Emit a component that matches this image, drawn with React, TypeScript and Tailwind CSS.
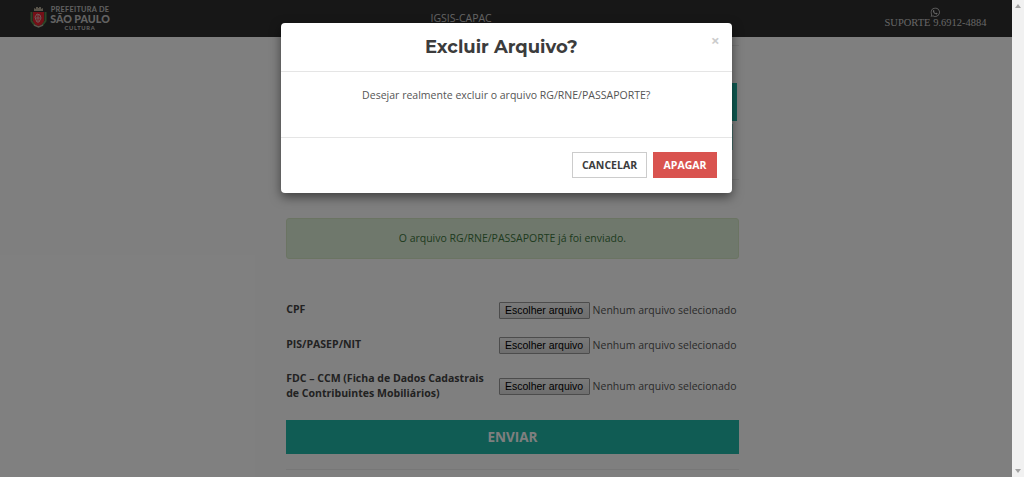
import React from 'react';
import { FaWhatsapp } from 'react-icons/fa';

function Crest() {
  return (
    <svg width="17" height="21" viewBox="0 0 17 21" className="shrink-0">
      <path d="M4 4V1l2 1V0h2v1h1V0h2v2l2-1v3z" fill="#b3a894" />
      <path d="M3 5h11v8c0 4-3 5-5.500 6C6 18 3 17 3 13z" fill="#e8202f" />
      <path d="M1.500 5v9l3 4M15.500 5v9l-3 4" fill="none" stroke="#5b8a50" strokeWidth="2" />
      <path d="M6 13l-1-3 2-3 3 1 1 3-2 4H7z" fill="none" stroke="#dcc8c4" strokeWidth=".9" />
      <path d="M6 11h4M8 8v6" stroke="#d8bcb8" strokeWidth=".9" />
      <path d="M4 18l4.500 2 4.500-2" fill="none" stroke="#b4aa99" strokeWidth="1.500" />
    </svg>
  );
}

function FileRow({ label, className }: { label: React.ReactNode; className: string }) {
  return (
    <div className={`flex items-center ${className}`}>
      <div className="w-[212.400px] shrink-0 pb-px text-[10.540px] font-bold leading-[14.500px] text-[#444]">{label}</div>
      <div className="flex h-[18px] items-center whitespace-nowrap">
        <button className="h-[17px] w-[91px] rounded-[1px] border border-[#999] bg-linear-to-b from-[#f4f4f4] to-[#dcdcdc] font-['Liberation_Sans',sans-serif] text-[10.5px] leading-[14px] text-black">
          Escolher arquivo
        </button>
        <span className="ml-[3px] text-[10.5px] leading-[15px] text-[#555]">Nenhum arquivo selecionado</span>
      </div>
    </div>
  );
}

function Page() {
  return (
    <div className="h-full bg-white">
      <header className="flex h-[37px] justify-between bg-[#2e2e2e]">
        <div className="flex w-[200px] pl-[30px] pt-[7px]">
          <Crest />
          <div className="-mt-px ml-[2px] w-[62px] text-center font-['Lato',sans-serif] font-bold text-[#c4c4c4]">
            <div className="whitespace-nowrap text-[7.300px] leading-[7px] tracking-[.3px]">PREFEITURA DE</div>
            <div className="whitespace-nowrap text-[10.700px] font-black leading-[11px]">SÃO PAULO</div>
            <div className="pt-px text-[5.800px] leading-[6px] tracking-[.7px]">CULTURA</div>
          </div>
        </div>
        <div className="flex-1 pl-[230.500px] pt-[11px] text-[10.5px] leading-[15px] text-[#ccc]">IGSIS-CAPAC</div>
        <div className="w-[153px] pt-[7px] text-center font-['Liberation_Serif',serif] text-[10.5px] leading-[11px] text-[#ccc]">
          <FaWhatsapp className="mx-auto size-[10.5px]" />
          <div className="-mt-px">SUPORTE 9.6912-4884</div>
        </div>
      </header>
      <main className="ml-[286.200px] w-[452.400px]">
        <div className="h-[182px] pt-2">
          <div className="h-[135px] border-y border-[#eee] pt-[37px]">
            <div className="h-[38px] w-[451px] bg-[#20b8a9]" />
            <div className="mt-[3px] h-[26px] w-[446.500px] border border-[#8fdbd4]" />
          </div>
        </div>
        <div className="-mt-px flex h-[41px] items-center justify-center rounded-[3px] border border-[#d6e9c6] bg-[#dff0d8] pt-px text-[10.5px] text-[#3c763d]">
          O arquivo RG/RNE/PASSAPORTE já foi enviado.
        </div>
        <FileRow label="CPF" className="mt-[42px] h-[18px]" />
        <FileRow label="PIS/PASEP/NIT" className="mt-[17px] h-[18px]" />
        <FileRow label={<>FDC – CCM (Ficha de Dados Cadastrais<br />de Contribuintes Mobiliários)</>} className="mt-[15px] h-[34px]" />
        <button className="mt-[17px] flex h-[34px] w-full items-center justify-center bg-[#20b8a9] text-[13.500px] font-bold text-white">ENVIAR</button>
        <hr className="mt-[15px] border-[#eee]" />
      </main>
    </div>
  );
}

function DeleteDialog() {
  return (
    <div className="absolute inset-0 bg-black/50">
      <div role="dialog" className="ml-[281px] mt-[23px] flex h-[170px] w-[450.500px] flex-col rounded-[4px] bg-white shadow-[0_4px_11px_rgba(0,0,0,0.5)]">
        <div className="relative flex h-[49px] items-center justify-center border-b border-[#e5e5e5] pr-[10px] pt-px">
          <h2 className="whitespace-nowrap font-['Montserrat','Inter',sans-serif] text-[18px] font-bold text-[#3c3c3c]">Excluir Arquivo?</h2>
          <button className="absolute right-[12px] top-[9px] text-[15px] font-bold leading-[16px] text-[#ccc]">×</button>
        </div>
        <p className="h-[65px] pt-[16px] text-center text-[10.540px] leading-[15px] text-[#555]">Desejar realmente excluir o arquivo RG/RNE/PASSAPORTE?</p>
        <div className="flex flex-1 justify-end gap-[6px] border-t border-[#e5e5e5] pr-[14.500px] pt-[14px] text-[10.5px] font-bold">
          <button className="h-[26px] w-[75px] border border-[#ccc] pt-px text-[#3c3c3c]">CANCELAR</button>
          <button className="h-[26px] w-[64px] bg-[#d9534f] pt-px text-white">APAGAR</button>
        </div>
      </div>
    </div>
  );
}

export default function App() {
  return (
    <div className="flex h-[477px] w-[1024px] overflow-hidden font-['Open_Sans',sans-serif]">
      <div className="relative w-[1012px] overflow-hidden">
        <Page />
        <DeleteDialog />
      </div>
      <div className="flex w-[12px] flex-col items-center justify-between bg-[#f1f1f1] py-[4px]">
        <svg width="6" height="4" viewBox="0 0 6 4"><path d="M0 4 3 0l3 4z" fill="#a3a3a3" /></svg>
        <svg width="6" height="4" viewBox="0 0 6 4"><path d="M0 0h6L3 4z" fill="#a3a3a3" /></svg>
      </div>
    </div>
  );
}
